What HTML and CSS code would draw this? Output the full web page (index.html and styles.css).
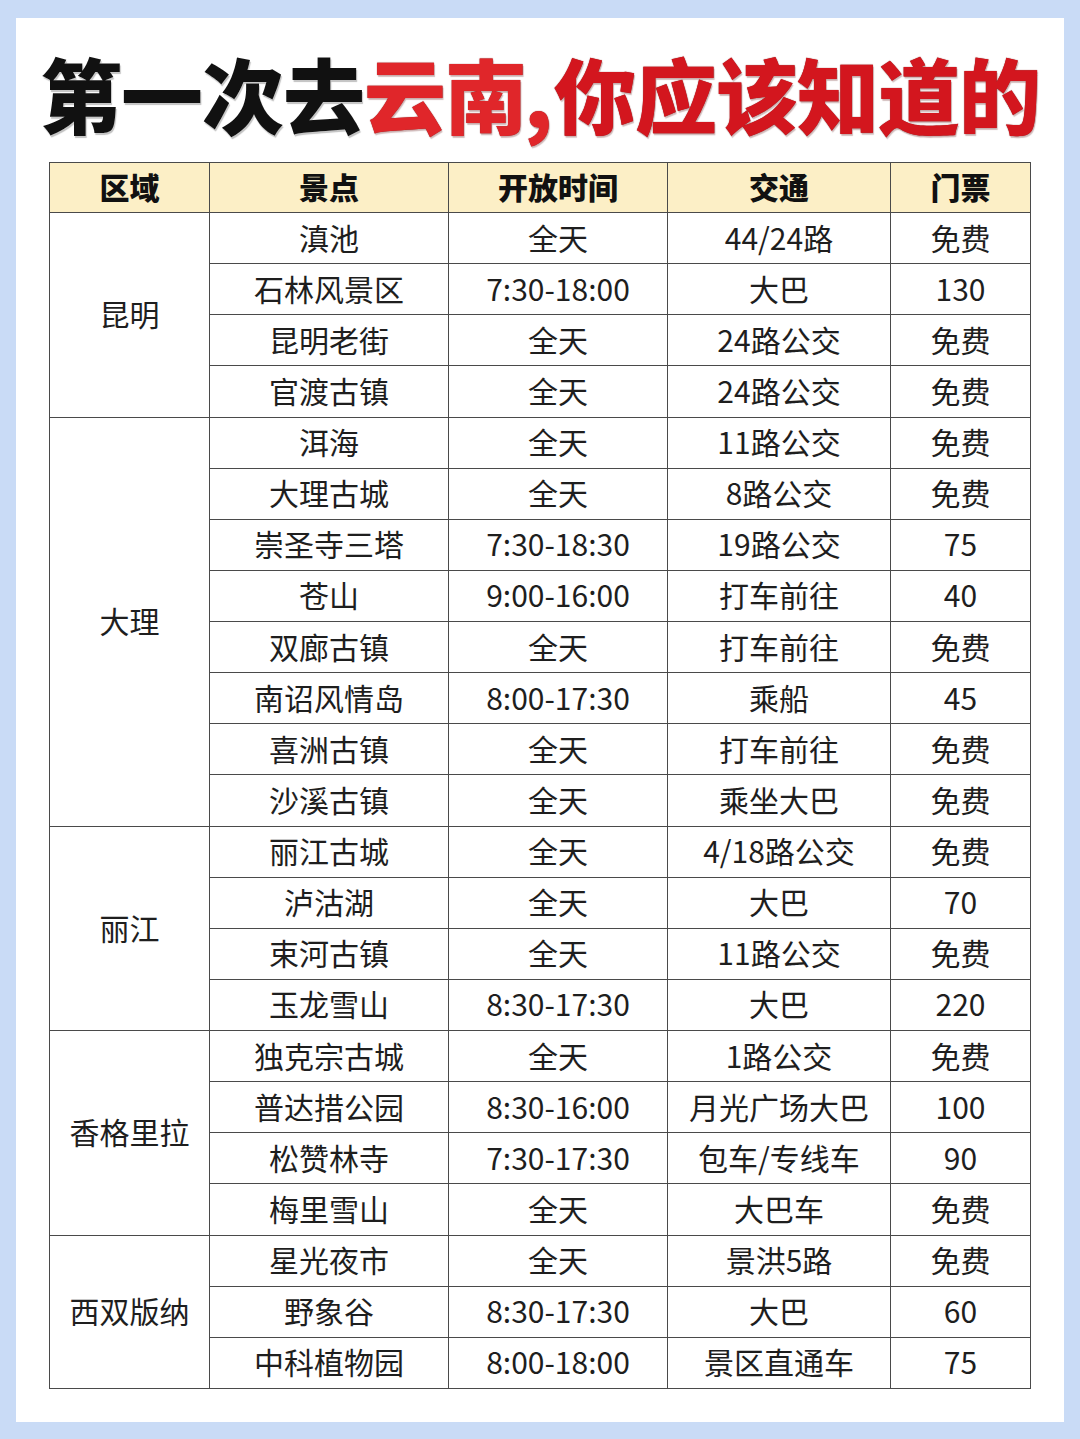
FILE: index.html
```html
<!DOCTYPE html>
<html lang="zh-CN">
<head>
<meta charset="utf-8">
<title>第一次去云南，你应该知道的</title>
<link rel="stylesheet" href="styles.css">
</head>
<body>
<div class="panel">
  <h1 class="title"><span class="black">第一次去</span><span class="red">云南<span class="comma">,</span></span><span class="red dark">你应该知道的</span></h1>
  <table class="guide">
    <colgroup>
      <col class="c1"><col class="c2"><col class="c3"><col class="c4"><col class="c5">
    </colgroup>
    <thead>
      <tr><th>区域</th><th>景点</th><th>开放时间</th><th>交通</th><th>门票</th></tr>
    </thead>
    <tbody>
      <tr><td rowspan="4">昆明</td><td>滇池</td><td>全天</td><td>44/24路</td><td>免费</td></tr>
      <tr><td>石林风景区</td><td>7:30-18:00</td><td>大巴</td><td>130</td></tr>
      <tr><td>昆明老街</td><td>全天</td><td>24路公交</td><td>免费</td></tr>
      <tr><td>官渡古镇</td><td>全天</td><td>24路公交</td><td>免费</td></tr>

      <tr><td rowspan="8">大理</td><td>洱海</td><td>全天</td><td>11路公交</td><td>免费</td></tr>
      <tr><td>大理古城</td><td>全天</td><td>8路公交</td><td>免费</td></tr>
      <tr><td>崇圣寺三塔</td><td>7:30-18:30</td><td>19路公交</td><td>75</td></tr>
      <tr><td>苍山</td><td>9:00-16:00</td><td>打车前往</td><td>40</td></tr>
      <tr><td>双廊古镇</td><td>全天</td><td>打车前往</td><td>免费</td></tr>
      <tr><td>南诏风情岛</td><td>8:00-17:30</td><td>乘船</td><td>45</td></tr>
      <tr><td>喜洲古镇</td><td>全天</td><td>打车前往</td><td>免费</td></tr>
      <tr><td>沙溪古镇</td><td>全天</td><td>乘坐大巴</td><td>免费</td></tr>

      <tr><td rowspan="4">丽江</td><td>丽江古城</td><td>全天</td><td>4/18路公交</td><td>免费</td></tr>
      <tr><td>泸沽湖</td><td>全天</td><td>大巴</td><td>70</td></tr>
      <tr><td>束河古镇</td><td>全天</td><td>11路公交</td><td>免费</td></tr>
      <tr><td>玉龙雪山</td><td>8:30-17:30</td><td>大巴</td><td>220</td></tr>

      <tr><td rowspan="4">香格里拉</td><td>独克宗古城</td><td>全天</td><td>1路公交</td><td>免费</td></tr>
      <tr><td>普达措公园</td><td>8:30-16:00</td><td>月光广场大巴</td><td>100</td></tr>
      <tr><td>松赞林寺</td><td>7:30-17:30</td><td>包车/专线车</td><td>90</td></tr>
      <tr><td>梅里雪山</td><td>全天</td><td>大巴车</td><td>免费</td></tr>

      <tr><td rowspan="3">西双版纳</td><td>星光夜市</td><td>全天</td><td>景洪5路</td><td>免费</td></tr>
      <tr><td>野象谷</td><td>8:30-17:30</td><td>大巴</td><td>60</td></tr>
      <tr><td>中科植物园</td><td>8:00-18:00</td><td>景区直通车</td><td>75</td></tr>
    </tbody>
  </table>
</div>
</body>
</html>
```

FILE: styles.css
```css
html, body {
  margin: 0;
  padding: 0;
}

body {
  width: 1080px;
  height: 1439px;
  background: #c9dbf6;
  font-family: "Noto Sans CJK SC", "Noto Sans", sans-serif;
  color: #1e1e1e;
  overflow: hidden;
}

.panel {
  margin: 18px 16px 0 16px;
  height: 1404px;
  background: #ffffff;
  box-sizing: border-box;
  padding-top: 28px;
}

.title {
  margin: 0 0 22px 0;
  height: 94px;
  text-align: center;
  font-family: "Noto Sans CJK SC", sans-serif;
  font-weight: 900;
  font-size: 82px;
  line-height: 94px;
  letter-spacing: -1px;
  white-space: nowrap;
}

.title .black {
  color: #111111;
  text-shadow: 0 0 1px #ffffff, 1px 2px 1px rgba(0, 0, 0, 0.25);
}

.title .red {
  color: #e0262a;
  text-shadow: 0 0 1px #7a0c0c, 1px 2px 1px rgba(80, 0, 0, 0.25);
}

.title .red.dark {
  color: #d3161e;
}

.title .comma {
  margin: 0 2px 0 -2px;
}

.guide {
  margin: 0 auto;
  width: 981px;
  border-collapse: collapse;
  table-layout: fixed;
  border: 1.5px solid #4a4a4a;
}

.c1 { width: 160px; }
.c2 { width: 239px; }
.c3 { width: 219px; }
.c4 { width: 223px; }
.c5 { width: 140px; }

.guide th,
.guide td {
  border: 1px solid #4a4a4a;
  text-align: center;
  vertical-align: middle;
  padding: 0 0 3px 0;
  white-space: nowrap;
  box-sizing: border-box;
}

.guide th {
  height: 50px;
  background: #fcefc6;
  font-weight: 900;
  font-size: 30px;
  color: #111111;
}

.guide td {
  height: 51.13px;
  font-size: 30px;
  font-weight: 400;
  color: #1e1e1e;
}
```
